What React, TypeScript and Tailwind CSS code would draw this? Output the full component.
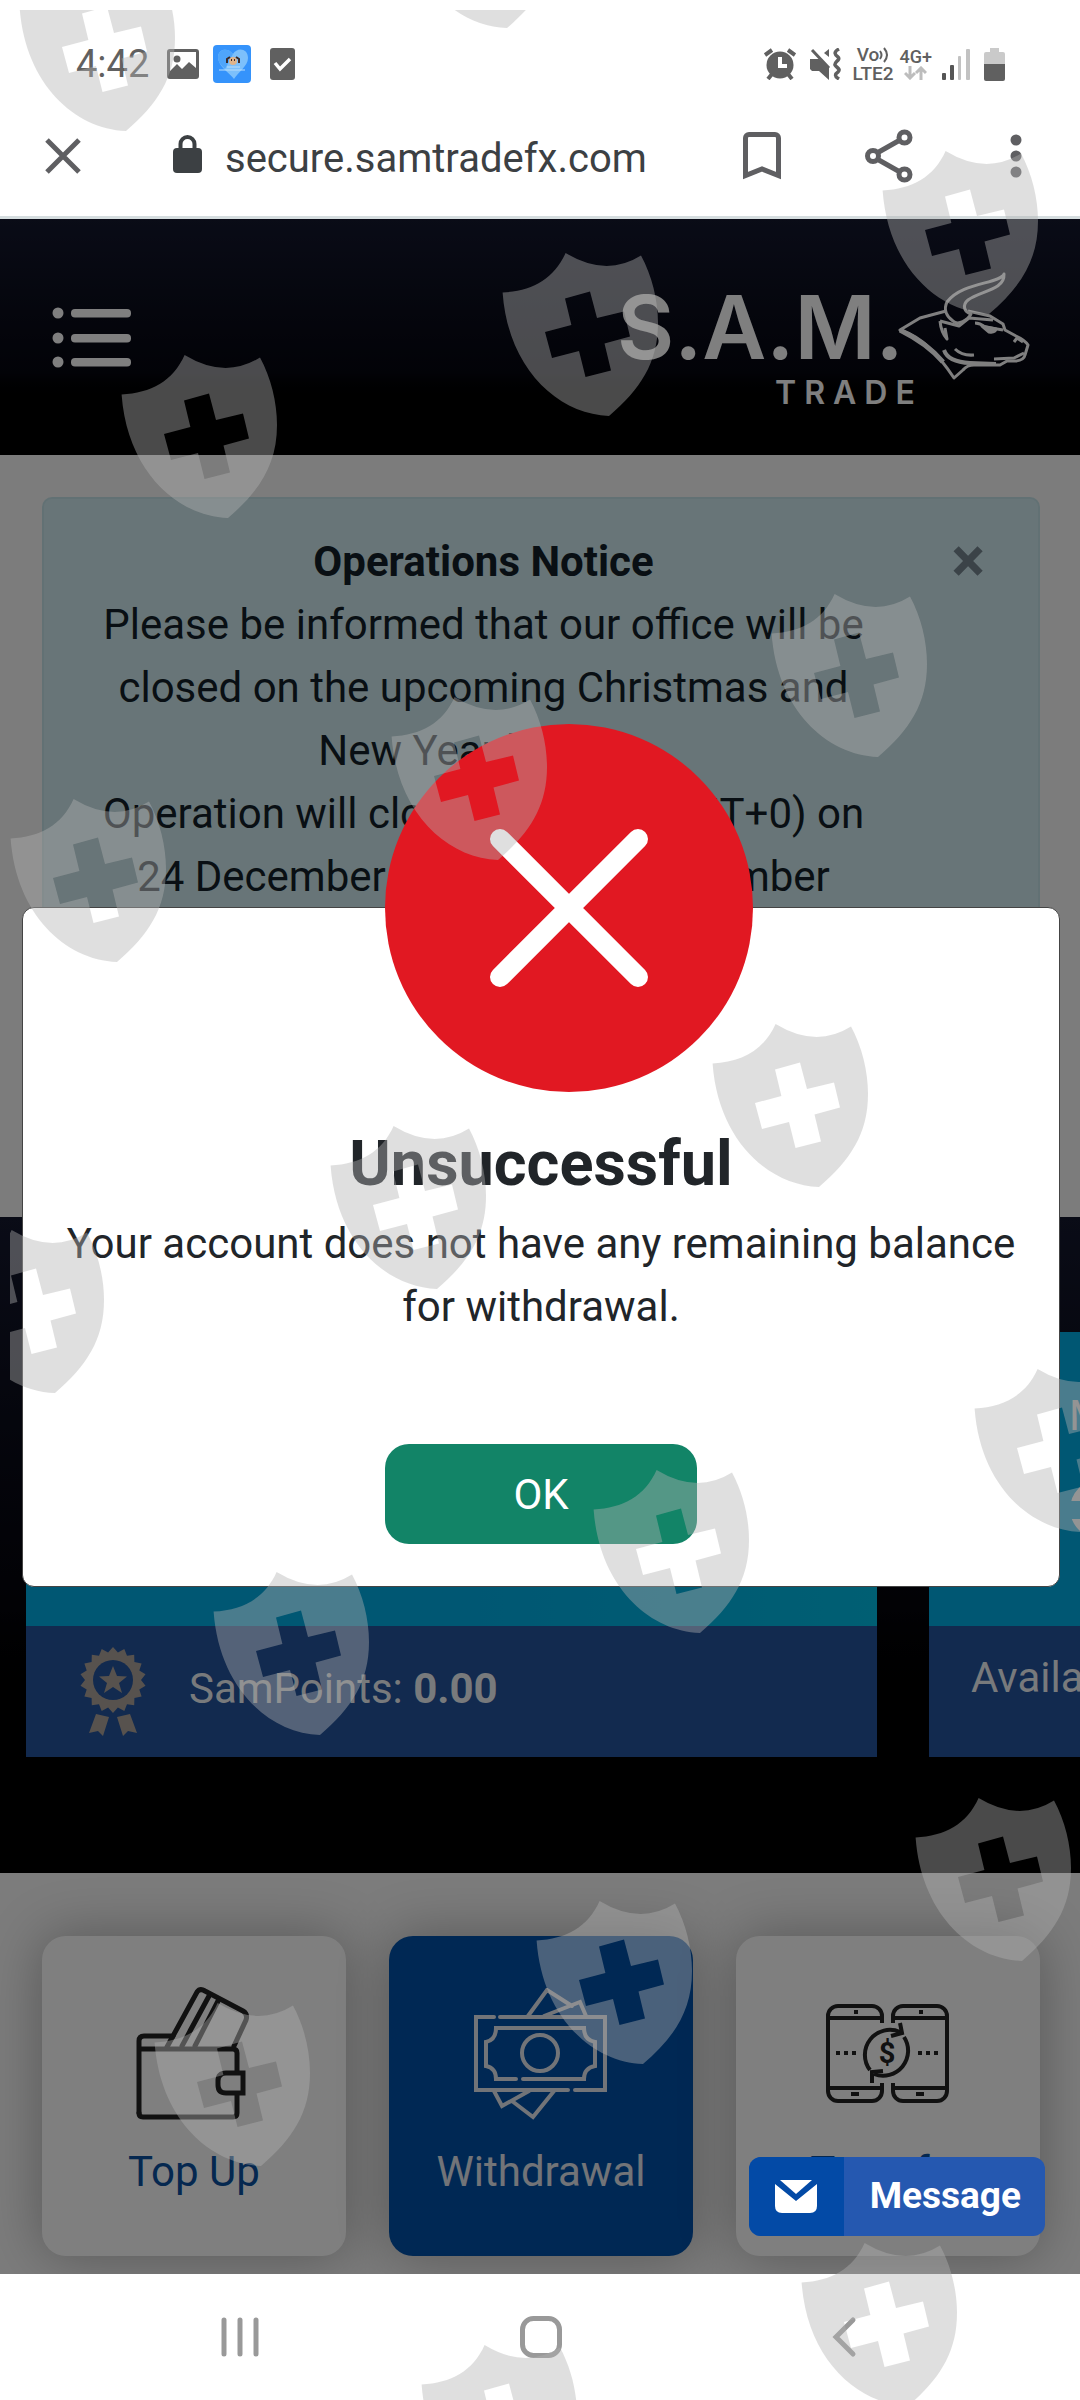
import type { ReactNode } from 'react';

const shields = [
  [19, -33],
  [400, -136],
  [882, 150],
  [121, 354],
  [502, 252],
  [771, 593],
  [391, 696],
  [10, 798],
  [712, 1023],
  [330, 1125],
  [-52, 1229],
  [593, 1469],
  [974, 1368],
  [213, 1571],
  [915, 1797],
  [536, 1900],
  [154, 2002],
  [801, 2242],
  [421, 2344],
];

const SHIELD_PATH =
  'M.6 40.5C30 39 52 27 63.6 1Q104 25.5 139 3.5C150 24 156 48 156 71C156 111 138 137.5 107 164C55 162 6 116 .6 40.5Z' +
  'M63 46.5L69.4 73L43 80L50 106L77 99L83.5 125L109 118.5L102.5 91.5L128 84.5L122 59.5L95 66L88 39.5Z';

function Watermark() {
  return (
    <div className="pointer-events-none absolute top-2.5 right-0 bottom-0 left-2.5 z-50 overflow-hidden">
      <svg className="h-full w-full" aria-hidden="true">
        <g transform="translate(-10 -10)" fill="#b2b2b2" fillOpacity="0.416" fillRule="evenodd">
          {shields.map(([x, y]) => (
            <path key={`${x}-${y}`} d={SHIELD_PATH} transform={`translate(${x} ${y})`} />
          ))}
        </g>
      </svg>
    </div>
  );
}

function StatusBar() {
  return (
    <div className="flex h-[100px] items-center justify-between pt-7 pr-[75px] pl-[76px] text-[#606060]">
      <div className="flex items-center">
        <span className="text-[38px]">4:42</span>
        <svg className="ml-[18px]" width="32" height="30" viewBox="0 0 32 30">
          <path
            fill="currentColor"
            fillRule="evenodd"
            d="M3 0H29a3 3 0 0 1 3 3V27a3 3 0 0 1-3 3H3a3 3 0 0 1-3-3V3a3 3 0 0 1 3-3ZM3 3V22L10 15L15 20L22 13L29 19V3ZM10 6.500a3.500 3.500 0 1 1 0 7a3.500 3.500 0 1 1 0-7Z"
          />
        </svg>
        <svg className="ml-[14px]" width="38" height="38" viewBox="0 0 38 38">
          <rect width="38" height="38" rx="4" fill="#3593fb" />
          <path fill="#7cc0fb" d="M21 34C17 28 5 22 5 12C5 4 15 2 20 9C24 2 35 3 35 13C35 21 25 27 21 34Z" />
          <path fill="#4fa5fa" d="M5 12C5 4 15 2 20 9L12 24C8 20 5 17 5 12Z" />
          <circle cx="20" cy="16" r="4" fill="#e0b48a" />
          <path stroke="#3b2a28" strokeWidth="2" fill="none" d="M14 18V14L17 12M26 18V14L23 12M18 15h1M21 15h1" />
          <path stroke="#b9defc" strokeWidth="1" d="M6 25H32M14 22H27" />
        </svg>
        <svg className="ml-[19px]" width="25" height="32" viewBox="0 0 25 32">
          <rect width="25" height="32" rx="3" fill="currentColor" />
          <path d="M5 15L10 21L20 11" fill="none" stroke="#fff" strokeWidth="3.500" />
        </svg>
      </div>

      <div className="flex items-center">
        <svg width="32" height="32" viewBox="0 0 32 32" fill="none" stroke="currentColor">
          <circle cx="16" cy="17" r="13.500" fill="currentColor" stroke="none" />
          <path d="M1 7L8 2M31 7L24 2M4 31L8 26M28 31L24 26" strokeWidth="4" />
          <path d="M16 9V18H23" stroke="#fff" strokeWidth="4" />
        </svg>
        <svg className="ml-[14px]" width="32" height="32" viewBox="0 0 32 32" fill="none" stroke="currentColor">
          <path d="M0 11H9L19 20V32L9 23H2L0 21Z" fill="currentColor" stroke="none" />
          <path d="M19 1V9L14 5Z" fill="currentColor" stroke="none" />
          <path d="M2 2L19 20" strokeWidth="3" />
          <path d="M29 1C23 4 25 7 28 9C31 12 24 14 25 17C27 20 31 21 28 24C25 26 24 28 29 31" strokeWidth="3.500" />
        </svg>
        <div className="ml-2.5 text-center text-[19px] leading-[19px] font-medium">
          <div className="flex items-center justify-center">
            Vo
            <svg width="10" height="16" viewBox="0 0 10 16" fill="none" stroke="currentColor" strokeWidth="2">
              <path d="M1 4Q4 8 1 12M5 1Q11 8 5 15" />
            </svg>
          </div>
          <div>LTE2</div>
        </div>
        <div className="ml-1.5 flex flex-col items-center text-[18px] leading-[18px] font-medium">
          4G+
          <svg width="23" height="14" viewBox="0 0 23 14" fill="none" stroke="#bdbdbd" strokeWidth="3">
            <path d="M6 0V12M1 7L6 12L11 7M17 14V2M12 7L17 2L22 7" />
          </svg>
        </div>
        <svg className="ml-2.5" width="28" height="31" viewBox="0 0 28 31">
          <rect y="24" width="4" height="7" rx="1" fill="#555" />
          <rect x="8" y="16" width="4" height="15" rx="1" fill="#555" />
          <rect x="16" y="7" width="3" height="24" rx="1" fill="#c2c2c2" />
          <rect x="24" width="4" height="31" rx="1" fill="#c2c2c2" />
        </svg>
        <svg className="ml-3.5" width="21" height="33" viewBox="0 0 21 33">
          <path fill="#cacaca" d="M6 0H15V4H19Q21 4 21 6V17H0V6Q0 4 2 4H6Z" />
          <path fill="currentColor" d="M0 16H21V31Q21 33 19 33H2Q0 33 0 31Z" />
        </svg>
      </div>
    </div>
  );
}

function AddressBar() {
  return (
    <div className="flex h-[119px] items-center border-b-3 border-[#d5dddf] pr-[58px] pb-1 pl-[45px] text-[#5f5f62]">
      <button aria-label="Close tab">
        <svg width="36" height="36" viewBox="0 0 36 36" stroke="currentColor" strokeWidth="5">
          <path d="M2 2L34 34M34 2L2 34" />
        </svg>
      </button>
      <svg className="mb-1 ml-[92px]" width="29" height="38" viewBox="0 0 29 38">
        <rect y="13" width="29" height="25" rx="4" fill="#3c4043" />
        <path d="M7.500 15V9A7 7 0 0 1 21.500 9V15" fill="none" stroke="#3c4043" strokeWidth="4" />
      </svg>
      <span className="ml-[23px] flex-1 pt-1.5 text-[40px] text-[#3c4043]">secure.samtradefx.com</span>
      <button aria-label="Bookmark">
        <svg width="38" height="48" viewBox="0 0 38 48" fill="none" stroke="currentColor" strokeWidth="5">
          <path d="M2.500 43.500V6a3.500 3.500 0 0 1 3.500-3.500H32a3.500 3.500 0 0 1 3.500 3.500V43.500L19 37Z" />
        </svg>
      </button>
      <button aria-label="Share" className="ml-[84px]">
        <svg width="48" height="54" viewBox="0 0 48 54" fill="none" stroke="currentColor" strokeWidth="5">
          <path d="M12 24L35 11M12 30L35 43" />
          <circle cx="8" cy="27" r="5.500" />
          <circle cx="39.500" cy="8.500" r="5.500" />
          <circle cx="39.500" cy="45.500" r="5.500" />
        </svg>
      </button>
      <button aria-label="More options" className="ml-[97px]">
        <svg width="12" height="44" viewBox="0 0 12 44" fill="currentColor">
          <circle cx="6" cy="6" r="5.500" />
          <circle cx="6" cy="22" r="5.500" />
          <circle cx="6" cy="38" r="5.500" />
        </svg>
      </button>
    </div>
  );
}

function BullLogo() {
  return (
    <svg
      width="132"
      height="110"
      viewBox="0 0 132 110"
      fill="none"
      stroke="currentColor"
      strokeWidth="3"
      strokeLinejoin="round"
    >
      <path d="M106 2C102 12 64 10 49 30C45 38 49 45 55 49C60 54 70 48 73 42C66 40 64 33 70 28C82 19 107 18 106 2Z" />
      <path d="M48 39L22 46L2 58C24 65 40 82 56 106L65 98Q69 93 76 93H102L109 89H118Q126 88 127 83L130 73Q127 68 118 64L107 58L105 52L92 44L70 39" />
      <path d="M2 58Q30 72 45 90" strokeWidth="5" />
      <path d="M42 49L61 54L71 46L95 48M42 49Q43 60 49 67L47 56" />
      <path d="M46 78Q50 90 72 91L98 92" strokeWidth="4" />
      <path d="M57 77Q64 84 76 83M77 51Q82 51 87 55L105 58M96 87L116 86L126 81M116 70L119 66L125 70" />
      <path d="M84 54L98 57Q97 61 91 60Z" fill="currentColor" />
    </svg>
  );
}

function SiteHeader() {
  return (
    <header className="flex h-[236px] justify-between bg-linear-to-b from-[#14182e] via-[#05060f] via-65% to-black to-80% px-[50px] text-white">
      <button aria-label="Open menu" className="mt-[87px] ml-0.5 self-start">
        <svg width="80" height="62" viewBox="0 0 80 62" fill="currentColor">
          <circle cx="6" cy="7" r="5.500" />
          <circle cx="6" cy="32" r="5.500" />
          <circle cx="6" cy="56" r="5.500" />
          <rect x="19" y="3" width="60" height="8.500" rx="4" />
          <rect x="19" y="28" width="60" height="8.500" rx="4" />
          <rect x="19" y="52" width="60" height="8.500" rx="4" />
        </svg>
      </button>
      <a href="#home" className="flex font-['Inter',sans-serif]">
        {/* the second line runs on below the bull's head */}
        <div className="mt-[56px] w-[281px] whitespace-nowrap">
          <div className="text-[88px] leading-[104px] font-semibold">S.A.M.</div>
          <div className="pl-[158px] text-[32px] leading-[28px] font-semibold tracking-[0.25em]">TRADE</div>
        </div>
        <div className="mt-[53px]">
          <BullLogo />
        </div>
      </a>
    </header>
  );
}

function Notice() {
  return (
    <section className="h-[762px] bg-[#f8f8f8] pt-[42px] pr-[40px] pl-[42px]">
      <div
        role="alert"
        className="relative rounded-[10px] border-2 border-[#c5e3e9] bg-[#d1ebf1] pt-[31px] pr-[168px] pb-24 pl-[53px] text-center leading-[63px] text-[#131f28]"
      >
        <strong className="font-bold">Operations Notice</strong>
        <p>Please be informed that our office will be closed on the upcoming Christmas and New Year holiday.</p>
        <p>Operation will close at 20:00 (GMT+0) on 24 December 2020 and 31 December</p>
        <button
          aria-label="Dismiss notice"
          className="absolute top-[30px] right-[53px] text-[63px] leading-[63px] font-bold text-[#768791]"
        >
          ×
        </button>
      </div>
    </section>
  );
}

function AwardIcon() {
  const teeth = Array.from({ length: 36 }, (_, i) => {
    const r = i % 2 ? 28 : 33;
    const a = (i * Math.PI) / 18 - Math.PI / 2;
    return `${(34 + r * Math.cos(a)).toFixed(1)},${(33 + r * Math.sin(a)).toFixed(1)}`;
  }).join(' ');
  return (
    <svg width="68" height="90" viewBox="0 0 68 90" fill="#aea49c">
      <polygon points={teeth} />
      <circle cx="34" cy="33" r="20" fill="#24549e" />
      <path d="M34 19L38 29L48 29.500L40 36L43 46L34 40L25 46L28 36L20 29.500L30 29Z" />
      <path d="M17 67L30 70L24 89L19 84L10 86ZM51 67L38 70L44 89L49 84L58 86Z" />
    </svg>
  );
}

function Wallets() {
  return (
    <section className="overflow-hidden bg-linear-to-b from-[#14182e] via-[#04040a] via-60% to-black to-80% pt-[115px] pb-[116px] pl-[26px] text-white">
      <div className="flex gap-[52px]">
        <article className="w-[851px] shrink-0">
          <div className="h-[294px] bg-linear-to-r from-[#00aee6] via-[#00aee6] to-[#00bee6]" />
          <div className="flex h-[131px] items-center bg-[#24549e] pl-[53px]">
            <AwardIcon />
            <p className="ml-[42px] pb-1.5 text-white/95">
              SamPoints: <b className="font-bold">0.00</b>
            </p>
          </div>
        </article>
        <article className="w-[851px] shrink-0">
          <div className="h-[294px] bg-[#00aee6] pt-[52px] pl-[140px]">
            <p className="leading-[63px]">MYR Wallet</p>
            <svg className="mt-8" width="60" height="60" viewBox="0 0 60 60">
              <circle cx="30" cy="30" r="29" fill="#fff" />
              <path d="M0 22H60V40H0Z" fill="#00aee6" />
            </svg>
          </div>
          <p className="h-[131px] bg-[#24549e] pt-5 pl-[42px] leading-[63px] text-white/95">Available: 0.00</p>
        </article>
      </div>
    </section>
  );
}

function TopUpIcon() {
  return (
    <svg width="116" height="134" viewBox="0 0 116 134" fill="none" stroke="#222" strokeWidth="5" strokeLinecap="round">
      <path d="M101 84V66Q101 62 97 62H3M3 126V54Q3 49 8 49H37L61 5Q64 1 69 4L107 24Q112 27 110 33L98 59" />
      <path d="M3 126Q3 130 7 130H97Q101 130 101 126V107" />
      <path d="M107 86V106H90Q82 106 82 98V94Q82 86 90 86Z" />
      <path d="M37 49L31 60M73 9L46 59M82 14L59 59M73 9L54 44" />
    </svg>
  );
}

function WithdrawalIcon() {
  return (
    <svg width="134" height="132" viewBox="0 0 134 132" fill="none" stroke="#e5e9f0" strokeWidth="4" strokeLinecap="round">
      <path d="M20 29H2V102H94M101 102H131V29H26" />
      <path d="M54 28L73 2L98 18M70 28L106 14L112 28" />
      <path d="M20 103L28 118L55 103M38 113L59 129L80 103" />
      <path d="M42 91H22Q22 80 12 78V54Q22 52 22 40H110Q110 52 121 54V78Q110 80 110 91H49" />
      <circle cx="66" cy="65" r="18" />
    </svg>
  );
}

function TransferIcon() {
  return (
    <svg width="124" height="100" viewBox="0 0 124 100" fill="none" stroke="#222" strokeWidth="4">
      <path d="M56 19V12A10 10 0 0 0 46 2H12A10 10 0 0 0 2 12V87A10 10 0 0 0 12 97H46A10 10 0 0 0 56 87V79M2 14H56M2 84H56" />
      <path d="M67 19V12A10 10 0 0 1 77 2H111A10 10 0 0 1 121 12V87A10 10 0 0 1 111 97H77A10 10 0 0 1 67 87V79M67 14H121M67 84H121" />
      <path d="M44 66A25 25 0 0 1 74 28M78 33A25 25 0 0 1 48 70" />
      <path d="M74 19L76 29L65 32M46 79V68L57 67" />
      <path d="M10 49H32M92 49H114" strokeDasharray="4 4" />
      <path d="M28 8H32M93 8H97M25 90H33M90 90H98" />
      <text x="61" y="59" textAnchor="middle" fill="#222" stroke="none" className="text-[29px] font-bold">
        $
      </text>
    </svg>
  );
}

type TileProps = { label: string; icon: ReactNode; active?: boolean };

function Tile({ label, icon, active }: TileProps) {
  return (
    <a
      href={`#${label.toLowerCase().replace(' ', '-')}`}
      className={`flex h-[320px] flex-1 flex-col items-center rounded-3xl pt-[50px] shadow-[0_0_56px_rgba(0,0,0,0.3)] ${
        active ? 'bg-[#0050a8] text-[#e5e9f0]' : 'bg-white text-[#0a50a0]'
      }`}
    >
      <span className="flex h-[136px] items-center">{icon}</span>
      <span className="mt-[18px] leading-[63px]">{label}</span>
    </a>
  );
}

function ResultDialog() {
  return (
    <div
      role="dialog"
      aria-labelledby="result-title"
      className="absolute top-[688px] right-[20px] left-[22px] z-20 flex flex-col items-center rounded-xl border border-[#444] bg-white px-[42px] pb-[42px] text-center text-[#212529]"
    >
      <svg className="-mt-[184px] ml-14" width="368" height="368" viewBox="0 0 368 368">
        <circle cx="184" cy="184" r="184" fill="#e11822" />
        <path d="M115 115L253 253M253 115L115 253" stroke="#fff" strokeWidth="20" strokeLinecap="round" />
      </svg>
      <h2 id="result-title" className="mt-[34px] text-[63px] leading-[76px] font-bold">
        Unsuccessful
      </h2>
      <p className="mt-2.5 leading-[63px]">Your account does not have any remaining balance for withdrawal.</p>
      <button className="mt-[106px] h-[100px] w-[312px] rounded-3xl bg-[#128467] text-white">OK</button>
    </div>
  );
}

function MessageButton() {
  return (
    <button className="absolute right-[35px] bottom-[38px] z-20 flex h-[79px] overflow-hidden rounded-xl bg-[#2558b0] text-[37px] font-bold text-white">
      <span className="flex h-full w-[95px] items-center justify-center bg-[#034aa6]">
        <svg width="42" height="33" viewBox="0 0 42 33" fill="#fff">
          <path d="M5 0H37L21 14Z" />
          <path d="M0 4L21 21L42 4V26Q42 33 35 33H7Q0 33 0 26Z" />
        </svg>
      </span>
      <span className="self-center pr-6 pb-0.5 pl-[26px]">Message</span>
    </button>
  );
}

function SystemNav() {
  return (
    <nav className="grid h-[126px] grid-cols-[1fr_auto_1fr] items-center bg-white pr-[220px] pl-[221px]">
      <button aria-label="Recent apps" className="justify-self-start">
        <svg width="40" height="42" viewBox="0 0 40 42" stroke="#999" strokeWidth="5" strokeLinecap="round">
          <path d="M3 4V38M19 4V38M35 4V38" />
        </svg>
      </button>
      <button aria-label="Home">
        <svg width="42" height="42" viewBox="0 0 42 42" fill="none" stroke="#999" strokeWidth="5">
          <rect x="2.500" y="2.500" width="37" height="37" rx="11" />
        </svg>
      </button>
      <button aria-label="Back" className="justify-self-end">
        <svg width="28" height="42" viewBox="0 0 28 42" fill="none" stroke="#999" strokeWidth="5" strokeLinecap="round">
          <path d="M21 4L4 21L21 38" />
        </svg>
      </button>
    </nav>
  );
}

export default function App() {
  return (
    <div className="relative overflow-hidden bg-white font-['Roboto',sans-serif] text-[42px]">
      <StatusBar />
      <AddressBar />
      <main className="relative">
        <SiteHeader />
        <Notice />
        <Wallets />
        <section className="flex gap-[43px] overflow-hidden bg-[#f8f8f8] pt-[63px] pr-[40px] pb-[18px] pl-[42px]">
          <Tile label="Top Up" icon={<TopUpIcon />} />
          <Tile label="Withdrawal" icon={<WithdrawalIcon />} active />
          <Tile label="Transfer" icon={<TransferIcon />} />
        </section>

        {/* Backdrop */}
        <div className="absolute inset-0 z-10 bg-black/50" />
        <ResultDialog />
        <MessageButton />
      </main>
      <SystemNav />
      <Watermark />
    </div>
  );
}
